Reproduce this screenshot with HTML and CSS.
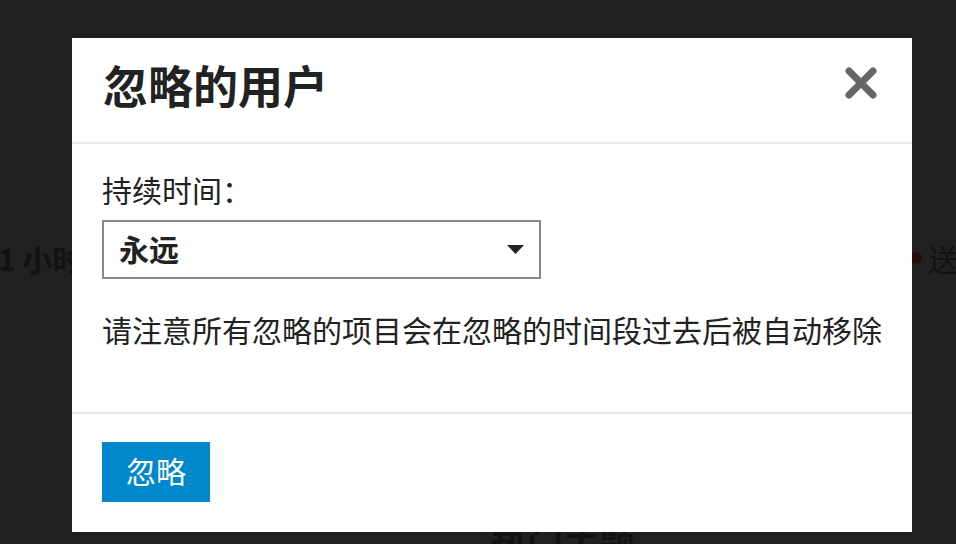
FILE: index.html
```html
<!DOCTYPE html>
<html lang="zh-CN">
<head>
    <meta charset="UTF-8">
    <title>忽略的用户</title>
    <link rel="stylesheet" href="styles.css">
</head>
<body>

    <!-- page behind the modal -->
    <div class="page">
        <div class="page-row">
            <span class="page-time">1 小时</span>
            <span class="page-send"><span class="dot"></span>送</span>
        </div>
        <div class="page-foot">热门主题</div>
    </div>

    <div class="modal-backdrop"></div>

    <div class="modal">
        <div class="modal-header">
            <h1>忽略的用户</h1>
            <button class="modal-close" aria-label="关闭">
                <svg width="34" height="32" viewBox="0 0 34 32">
                    <path d="M5 4 L29 28 M29 4 L5 28" stroke="#666" stroke-width="7" stroke-linecap="round" fill="none"/>
                </svg>
            </button>
        </div>
        <div class="modal-body">
            <label for="duration">持续时间：</label>
            <div class="select">
                <span>永远</span>
                <svg width="17" height="9" viewBox="0 0 17 9"><path d="M0 0 H17 L8.5 9 Z" fill="#222"/></svg>
            </div>
            <p>请注意所有忽略的项目会在忽略的时间段过去后被自动移除</p>
        </div>
        <div class="modal-footer">
            <button class="btn-primary">忽略</button>
        </div>
    </div>

</body>
</html>
```

FILE: styles.css
```css
body {
    margin: 0;
    padding: 0;
    font-family: "Noto Sans CJK SC", "Noto Sans", sans-serif;
    background: #232323;
    color: #222;
    overflow: hidden;
    height: 544px;
}
/* Page content dimmed by the backdrop */
.page {
    height: 544px;
    display: flex;
    flex-direction: column;
    color: #131313;
}
.page-row {
    display: flex;
    justify-content: space-between;
    align-items: center;
    margin-top: 236px;
    margin-left: -2px;
    margin-right: -2px;
    font-size: 30px;
    font-weight: bold;
}
.page-send {
    display: flex;
    align-items: center;
    gap: 6px;
    font-weight: normal;
}
.dot {
    width: 12px;
    height: 12px;
    border-radius: 50%;
    background: #2a0c0c;
}
.page-foot {
    margin-top: auto;
    margin-bottom: -24px;
    align-self: center;
    padding-left: 170px;
    font-size: 36px;
    font-weight: bold;
}
.modal-backdrop {
    position: fixed;
    inset: 0;
    background: rgba(0, 0, 0, 0.05);
}
/* Modal */
.modal {
    position: fixed;
    left: 72px;
    top: 38px;
    width: 840px;
    height: 494px;
    background: #fff;
    display: flex;
    flex-direction: column;
}
.modal-header {
    display: flex;
    align-items: center;
    justify-content: space-between;
    height: 104px;
    padding: 0 34px 0 31px;
    border-bottom: 2px solid #e9e9e9;
}
.modal-header h1 {
    margin: -10px 0 0 0;
    font-size: 45px;
    font-weight: bold;
    line-height: 1.2;
    color: #222;
}
.modal-close {
    background: none;
    border: none;
    padding: 0;
    margin-top: -14px;
    cursor: pointer;
    display: flex;
}
.modal-body {
    padding: 24px 30px 0 30px;
    height: 244px;
    border-bottom: 2px solid #e9e9e9;
    font-size: 30px;
}
.modal-body label {
    display: block;
    line-height: 42px;
    margin-bottom: 10px;
}
.select {
    width: 439px;
    height: 59px;
    box-sizing: border-box;
    border: 2px solid #888;
    display: flex;
    align-items: center;
    justify-content: space-between;
    padding: 0 15px 4px 15px;
    font-weight: bold;
}
.select svg {
    margin-top: 4px;
}
.modal-body p {
    margin: 29px 0 0 0;
    line-height: 42px;
}
.modal-footer {
    padding: 28px 30px 0 30px;
}
.btn-primary {
    width: 108px;
    height: 60px;
    background: #0088cc;
    color: #fff;
    border: none;
    font-family: inherit;
    font-size: 30px;
    line-height: 1;
    cursor: pointer;
    padding: 0 0 5px 0;
}
```
